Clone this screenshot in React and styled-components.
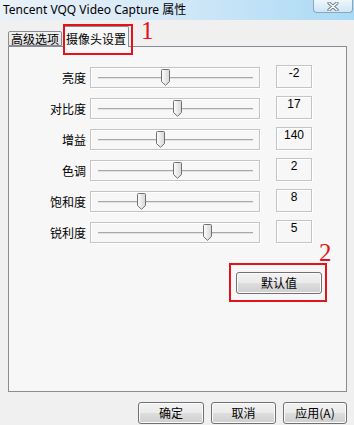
import React from 'react'
import styled, { createGlobalStyle } from 'styled-components'

const sliders = [
  { label: '亮度', value: '-2', pos: 70 },
  { label: '对比度', value: '17', pos: 82 },
  { label: '增益', value: '140', pos: 65 },
  { label: '色调', value: '2', pos: 82 },
  { label: '饱和度', value: '8', pos: 46 },
  { label: '锐利度', value: '5', pos: 112 },
]

const GlobalStyle = createGlobalStyle`
  html, body {
    margin: 0;
    padding: 0;
    background: #f0f0f0;
  }
  body {
    font-family: "Noto Sans CJK SC", "Noto Sans", sans-serif;
    font-size: 12px;
  }
`

const Window = styled.div`
  width: 354px;
  height: 425px;
  display: flex;
  flex-direction: column;
  background: #f0f0f0;
  overflow: hidden;
`

const TitleBar = styled.div`
  position: relative;
  flex: none;
  height: 20px;
  display: flex;
  align-items: center;
  padding-left: 3px;
  background: linear-gradient(to right, #e9f1f9 0%, #d6e9f7 45%, #a9daf5 100%);
  font-family: "Noto Sans", "Noto Sans CJK SC", sans-serif;
  font-size: 12px;
  line-height: 14px;
  color: #000;
`

const CloseButton = styled.div`
  position: absolute;
  top: 0;
  right: 1px;
  width: 38px;
  height: 12px;
  border: 1px solid #8ea4ba;
  border-top: none;
  border-radius: 0 0 4px 4px;
  background: linear-gradient(#eef6fc, #cfe6f5);
  display: flex;
  align-items: center;
  justify-content: center;
`

const Body = styled.div`
  flex: 1;
  display: flex;
  flex-direction: column;
  padding: 6px 7px 0 8px;
`

const TabStrip = styled.div`
  display: flex;
  align-items: flex-end;
  height: 21px;
  margin-bottom: -1px;
  position: relative;
  z-index: 2;
`

const Tab = styled.div`
  position: relative;
  box-sizing: border-box;
  width: ${p => p.$w}px;
  height: ${p => (p.$active ? 21 : 15)}px;
  margin-bottom: ${p => (p.$active ? 0 : 1)}px;
  margin-left: ${p => (p.$active ? 1 : 0)}px;
  border: 1px solid #898c95;
  border-bottom: ${p => (p.$active ? 'none' : '1px solid #898c95')};
  border-radius: 2px 2px 0 0;
  background: ${p => (p.$active ? '#f7f7f7' : 'linear-gradient(#f2f2f2, #e3e3e3)')};
  display: flex;
  align-items: ${p => (p.$active ? 'flex-start' : 'center')};
  justify-content: center;
  padding-top: ${p => (p.$active ? 5 : 0)}px;
  font-size: 12px;
  line-height: 13px;
  color: #000;
`

const RedMark = styled.div`
  position: absolute;
  left: ${p => p.$l}px;
  top: ${p => p.$t}px;
  right: ${p => p.$r}px;
  bottom: ${p => p.$b}px;
  border: 2px solid #e3131b;
  pointer-events: none;
`

const RedNumber = styled.span`
  position: absolute;
  left: ${p => p.$l}px;
  top: ${p => p.$t}px;
  font-family: "Liberation Serif", serif;
  font-size: 25px;
  line-height: 17px;
  color: #e3131b;
`

const Panel = styled.div`
  flex: none;
  box-sizing: border-box;
  width: 339px;
  height: 346px;
  border: 1px solid #898c95;
  background: #f7f7f7;
  padding-top: 18px;
  display: flex;
  flex-direction: column;
`

const Rows = styled.div`
  display: flex;
  flex-direction: column;
  gap: 8px;
`

const Row = styled.div`
  display: flex;
  align-items: flex-end;
  height: 23px;
`

const Label = styled.div`
  width: 77px;
  margin-right: 4px;
  height: 21px;
  line-height: 21px;
  text-align: right;
  color: #000;
`

const SliderBox = styled.div`
  position: relative;
  box-sizing: border-box;
  width: 170px;
  height: 21px;
  border: 1px solid #c4c4c4;
  box-shadow: inset 1px 1px 0 #fff, 1px 1px 0 #fff;
  padding: 9px 6px 0 7px;
`

const Track = styled.div`
  height: 1px;
  border-top: 1px solid #a8a8a8;
  background: #e2e2e2;
`

const Thumb = styled.svg`
  position: absolute;
  top: 1px;
`

const ValueBox = styled.div`
  box-sizing: border-box;
  width: 36px;
  height: 23px;
  margin-left: 16px;
  border: 1px solid #c4c4c4;
  box-shadow: inset 1px 1px 0 #fff, 1px 1px 0 #fff;
  text-align: center;
  font-family: "Liberation Sans", sans-serif;
  font-size: 12px;
  line-height: 14px;
  color: #000;
`

const DefaultRow = styled.div`
  display: flex;
  justify-content: flex-end;
  margin-top: 29px;
  padding-right: 24px;
`

const ButtonWrap = styled.div`
  position: relative;
`

const PushButton = styled.button`
  display: block;
  box-sizing: border-box;
  width: ${p => p.$w}px;
  height: 22px;
  padding: 0;
  border: 1px solid #707070;
  border-radius: 3px;
  background: linear-gradient(#f2f2f2 0%, #ebebeb 48%, #dddddd 52%, #cfcfcf 100%);
  box-shadow: inset 0 0 0 1px #fbfbfb;
  font-family: "Noto Sans CJK SC", sans-serif;
  font-size: 12px;
  line-height: 20px;
  color: #000;
`

const Footer = styled.div`
  display: flex;
  justify-content: flex-end;
  gap: 7px;
  margin-top: 10px;
`

const ThumbIcon = ({ left }) => (
  <Thumb width="9" height="17" viewBox="0 0 9 17" style={{ left }}>
    <defs>
      <linearGradient id="tg" x1="0" x2="1" y1="0" y2="0">
        <stop offset="0" stopColor="#fdfdfd" />
        <stop offset="1" stopColor="#d6d6d6" />
      </linearGradient>
    </defs>
    <path
      d="M0.5 1.5 Q0.5 0.5 1.5 0.5 H7.5 Q8.5 0.5 8.5 1.5 V12.5 L4.5 16.3 L0.5 12.5 Z"
      fill="url(#tg)"
      stroke="#707070"
      strokeWidth="1"
    />
  </Thumb>
)

const CloseIcon = () => (
  <svg width="12" height="9" viewBox="0 0 12 9">
    <path d="M2 1 L10 8 M10 1 L2 8" stroke="#6b7886" strokeWidth="3.2" strokeLinecap="round" />
    <path d="M2 1 L10 8 M10 1 L2 8" stroke="#ffffff" strokeWidth="1.4" strokeLinecap="round" />
  </svg>
)

const App = () => {
  return (
    <>
      <GlobalStyle />
      <Window>
        <TitleBar>
          Tencent VQQ Video Capture 属性
          <CloseButton>
            <CloseIcon />
          </CloseButton>
        </TitleBar>
        <Body>
          <TabStrip>
            <Tab $w={54}>高级选项</Tab>
            <Tab $w={66} $active>
              摄像头设置
              <RedMark $l={-1} $t={-3} $r={-5} $b={-8} />
              <RedNumber $l={77} $t={-5}>1</RedNumber>
            </Tab>
          </TabStrip>
          <Panel>
            <Rows>
              {sliders.map(s => (
                <Row key={s.label}>
                  <Label>{s.label}</Label>
                  <SliderBox>
                    <Track />
                    <ThumbIcon left={s.pos} />
                  </SliderBox>
                  <ValueBox>{s.value}</ValueBox>
                </Row>
              ))}
            </Rows>
            <DefaultRow>
              <ButtonWrap>
                <PushButton $w={86}>默认值</PushButton>
                <RedMark $l={-7} $t={-9} $r={-5} $b={-8} />
                <RedNumber $l={83} $t={-28}>2</RedNumber>
              </ButtonWrap>
            </DefaultRow>
          </Panel>
          <Footer>
            <PushButton $w={66}>确定</PushButton>
            <PushButton $w={65}>取消</PushButton>
            <PushButton $w={64}>应用(A)</PushButton>
          </Footer>
        </Body>
      </Window>
    </>
  )
}

export default App
